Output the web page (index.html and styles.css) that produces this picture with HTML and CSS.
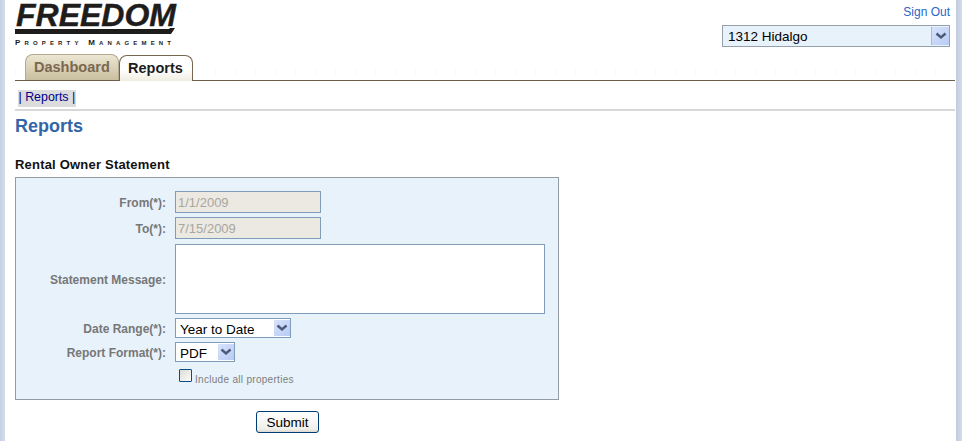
FILE: index.html
```html
<!DOCTYPE html>
<html lang="en">
<head>
<meta charset="utf-8">
<title>Reports</title>
<link rel="stylesheet" href="styles.css">
</head>
<body>
<div class="page">
  <header class="header">
    <div class="logo">
      <div class="logo-word">FREEDOM</div>
      <svg class="logo-swoosh" width="162" height="5" viewBox="0 0 162 5"><polygon points="0,0 154,0 155,-1 160,-1 156,5 0,5" fill="#1f1c1c"/></svg>
      <div class="logo-sub"><span class="cap">P</span>ROPERTY <span class="cap">M</span>ANAGEMENT</div>
    </div>
    <div class="account">
      <a class="signout" href="#">Sign Out</a>
      <div class="select-wrap property">
        <select><option>1312 Hidalgo</option></select>
        <span class="arrow"><svg width="12" height="8" viewBox="0 0 12 8"><path d="M1.500 1.500 6 5.500 10.500 1.500" fill="none" stroke="#4a5a78" stroke-width="2.400"/></svg></span>
      </div>
    </div>
  </header>
  <nav class="tabs">
    <a class="tab inactive" href="#">Dashboard</a>
    <a class="tab active" href="#">Reports</a>
  </nav>
  <div class="subnav"><a class="subnav-item" href="#">| Reports |</a></div>
  <main class="content">
    <h1 class="title">Reports</h1>
    <h2 class="subtitle">Rental Owner Statement</h2>
    <form class="panel">
      <label class="lbl">From(*):</label>
      <input class="field" type="text" value="1/1/2009" disabled>
      <label class="lbl">To(*):</label>
      <input class="field" type="text" value="7/15/2009" disabled>
      <label class="lbl">Statement Message:</label>
      <textarea class="message"></textarea>
      <label class="lbl">Date Range(*):</label>
      <div class="select-wrap range">
        <select><option>Year to Date</option></select>
        <span class="arrow"><svg width="12" height="8" viewBox="0 0 12 8"><path d="M1.500 1.500 6 5.500 10.500 1.500" fill="none" stroke="#4a5a78" stroke-width="2.400"/></svg></span>
      </div>
      <label class="lbl">Report Format(*):</label>
      <div class="select-wrap format">
        <select><option>PDF</option></select>
        <span class="arrow"><svg width="12" height="8" viewBox="0 0 12 8"><path d="M1.500 1.500 6 5.500 10.500 1.500" fill="none" stroke="#4a5a78" stroke-width="2.400"/></svg></span>
      </div>
      <label class="check"><span class="box"></span><span class="check-text">Include all properties</span></label>
    </form>
    <div class="actions"><button class="submit" type="button">Submit</button></div>
  </main>
</div>
</body>
</html>
```
FILE: styles.css
```css
* { box-sizing: border-box; }
html, body { margin: 0; height: 100%; }
body {
  background: #fff;
  font-family: "Liberation Sans", Arial, sans-serif;
  overflow: hidden;
}
.page {
  width: 962px;
  height: 441px;
  padding: 0 7px 0 15px;
  background:
    linear-gradient(90deg, #c3d1e4, #d3deec) left top / 5px 100% no-repeat,
    linear-gradient(90deg, #c0cbdf, #d5ddea) right top / 6px 100% no-repeat,
    #fff;
}
.header {
  height: 55px;
  display: flex;
  justify-content: space-between;
}
.logo { padding-top: 2px; width: 162px; }
.logo-word {
  font-size: 32px;
  line-height: 27px;
  font-weight: 700;
  font-style: italic;
  color: #1f1c1c;
  -webkit-text-stroke: 0.4px #1f1c1c;
  margin-left: 1px;
  white-space: nowrap;
}
.logo-swoosh { display: block; overflow: visible; }
.logo-sub {
  font-size: 6px;
  line-height: 8px;
  font-weight: 700;
  color: #1f1c1c;
  letter-spacing: 4.150px;
  margin-top: 5px;
  white-space: nowrap;
}
.logo-sub .cap { font-size: 8px; }
.account {
  width: 228px;
  margin-right: 5px;
  display: flex;
  flex-direction: column;
  align-items: flex-end;
}
.signout {
  font-size: 12px;
  line-height: 14px;
  margin-top: 5px;
  color: #2a66c8;
  text-decoration: none;
}
.select-wrap { position: relative; display: block; }
.select-wrap select {
  appearance: none;
  -webkit-appearance: none;
  display: block;
  width: 100%;
  height: 100%;
  margin: 0;
  padding: 2px 0 0 4px;
  border: 1px solid #7f9db9;
  border-radius: 0;
  background: #fff;
  color: #000;
  font-family: "Liberation Sans", Arial, sans-serif;
  font-size: 13.500px;
  outline: none;
}
.arrow {
  position: absolute;
  top: 2px;
  right: 1px;
  bottom: 2px;
  width: 18px;
  display: flex;
  align-items: center;
  justify-content: center;
  background: linear-gradient(135deg, #d8e3fb, #b8cbf5);
  border-left: 1px solid #a9b9d6;
}
.property { width: 228px; height: 22px; margin-top: 6px; }
.property select { background: #e8f2fb; border-color: #94a0ae; padding: 0 0 0 5px; }
.tabs {
  height: 26px;
  display: flex;
  align-items: flex-end;
  padding-left: 10px;
  border-bottom: 1px solid #6f5d4b;
  background:
    repeating-linear-gradient(90deg, #fafafa 0 1px, transparent 1px 20px) left 75% / 100% 8px no-repeat,
    #fff;
}
.tab {
  height: 26px;
  font-size: 14.500px;
  line-height: 25px;
  font-weight: 700;
  text-decoration: none;
  border: 1px solid #a89a80;
  border-bottom: 0;
  border-radius: 8px 8px 0 0;
}
.tab.inactive {
  width: 94px;
  padding: 0 0 0 8px;
  color: #7a6850;
  background: linear-gradient(180deg, #ece6d2 0%, #e0d8c0 35%, #c9bfa0 100%);
  border-color: #b5aa90;
}
.tab.active {
  width: 74px;
  padding: 0 0 0 8px;
  margin-bottom: -1px;
  color: #1d1d1d;
  background: linear-gradient(180deg, #fff 0%, #fff 55%, #f0ece0 100%);
  border-color: #76664f;
  position: relative;
}
.subnav {
  height: 30px;
  padding: 6px 0 0 3px;
  border-bottom: 2px solid #d8d8d8;
}
.subnav-item {
  display: inline-block;
  height: 17px;
  padding: 0 0.500px;
  background: #dcdcdc;
  font-size: 12.400px;
  line-height: 15px;
  color: #00008b;
  text-decoration: none;
}
.title {
  margin: 4px 0 0;
  font-size: 18px;
  line-height: 22px;
  font-weight: 700;
  color: #3465a8;
}
.subtitle {
  margin: 20px 0 0;
  font-size: 13px;
  line-height: 16px;
  font-weight: 700;
  color: #111;
  letter-spacing: 0.200px;
}
.panel {
  width: 544px;
  height: 223px;
  margin-top: 4px;
  padding: 13px 0 0;
  background: #e8f2fb;
  border: 1px solid #959ca3;
  display: grid;
  grid-template-columns: 150px 370px;
  column-gap: 9px;
  row-gap: 4px;
  grid-template-rows: 22px 22px 71px 20px 20px auto;
  align-items: center;
  align-content: start;
}
.lbl {
  text-align: right;
  padding-top: 2px;
  font-size: 12px;
  font-weight: 700;
  color: #777;
}
.field {
  width: 146px;
  height: 22px;
  margin: 0;
  padding: 0 2px;
  border: 1px solid #7f9db9;
  background: #ebe9e2;
  color: #a9a69e;
  font-family: "Liberation Sans", Arial, sans-serif;
  font-size: 13px;
  opacity: 1;
}
.message {
  display: block;
  align-self: end;
  width: 370px;
  height: 70px;
  margin: 0;
  border: 1px solid #7f9db9;
  background: #fff;
  resize: none;
}
.range { width: 116px; height: 20px; }
.format { width: 60px; height: 20px; }
.range .arrow, .format .arrow { width: 16px; border-left: 0; }
.check {
  grid-column: 2;
  display: flex;
  align-items: flex-end;
  padding-left: 4px;
  margin-top: 3px;
}
.box {
  width: 13px;
  height: 13px;
  border: 1px solid #0f4a80;
  border-radius: 1px;
  background: linear-gradient(135deg, #dcdcd7, #fbfbf9);
}
.check-text {
  margin: 0 0 -3px 3px;
  font-size: 10px;
  line-height: 11px;
  letter-spacing: 0.300px;
  color: #7e7e7e;
  font-weight: 400;
}
.actions {
  width: 544px;
  margin-top: 11px;
  padding-left: 241px;
}
.submit {
  display: block;
  width: 63px;
  height: 22px;
  padding: 0;
  border: 1px solid #003c74;
  border-radius: 3px;
  background: linear-gradient(180deg, #fff, #f0f0ea 85%, #dcd8ce);
  color: #000;
  font-family: "Liberation Sans", Arial, sans-serif;
  font-size: 13.500px;
}
```
